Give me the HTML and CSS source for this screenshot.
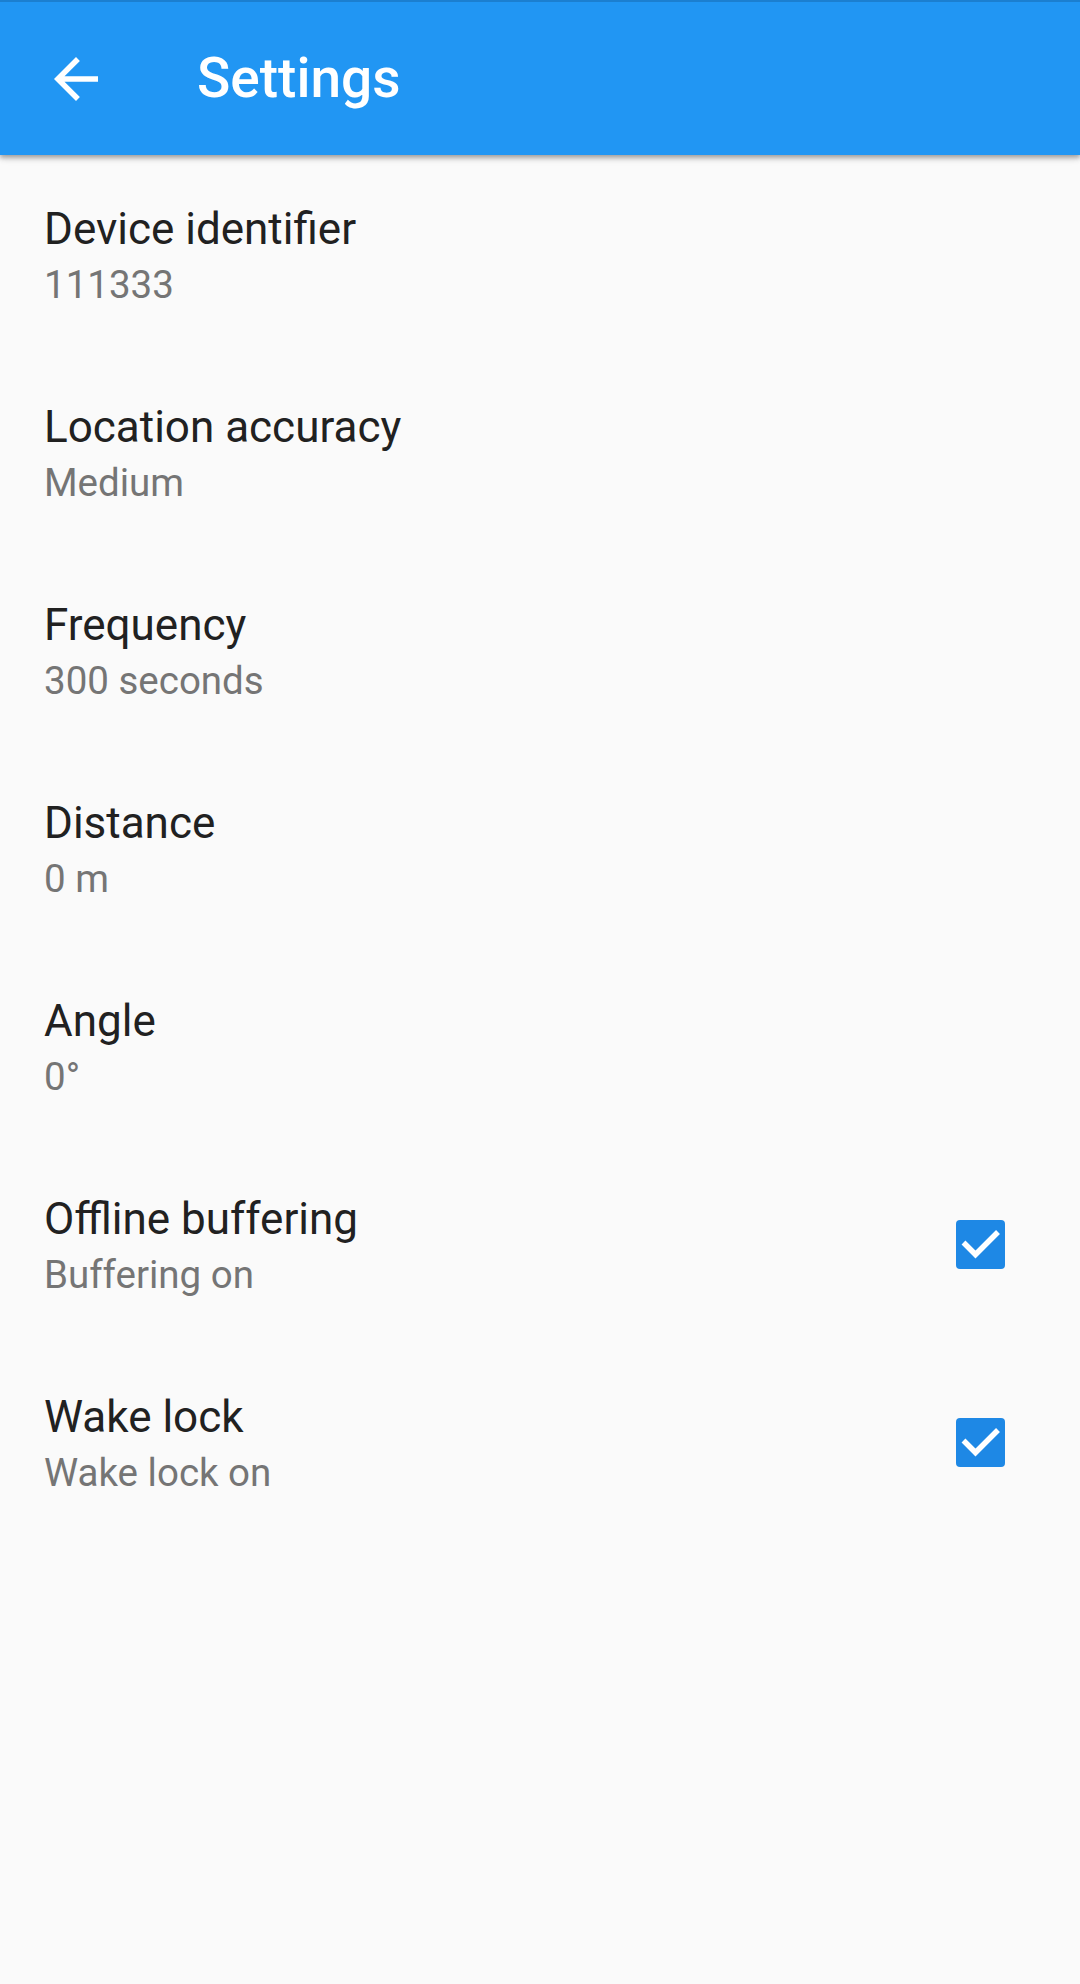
FILE: index.html
```html
<!DOCTYPE html>
<html>
<head>
<meta charset="utf-8">
<link rel="stylesheet" href="styles.css">
</head>
<body>
<header class="appbar">
  <svg class="back" viewBox="0 0 24 24" width="66" height="66"><path fill="#fff" d="M20 11H7.83l5.59-5.59L12 4l-8 8 8 8 1.41-1.41L7.83 13H20v-2z"/></svg>
  <h1 class="title">Settings</h1>
</header>
<main class="list">
  <div class="tile"><div class="text"><div class="t">Device identifier</div><div class="s">111333</div></div></div>
  <div class="tile"><div class="text"><div class="t">Location accuracy</div><div class="s">Medium</div></div></div>
  <div class="tile"><div class="text"><div class="t">Frequency</div><div class="s">300 seconds</div></div></div>
  <div class="tile"><div class="text"><div class="t">Distance</div><div class="s">0 m</div></div></div>
  <div class="tile"><div class="text"><div class="t">Angle</div><div class="s">0°</div></div></div>
  <div class="tile"><div class="text"><div class="t">Offline buffering</div><div class="s">Buffering on</div></div>
    <span class="check"><svg viewBox="0 0 49 49" width="49" height="49"><path d="M7.5 22.5 L19.5 34.5 L42 12" fill="none" stroke="#fff" stroke-width="5.5"/></svg></span></div>
  <div class="tile"><div class="text"><div class="t">Wake lock</div><div class="s">Wake lock on</div></div>
    <span class="check"><svg viewBox="0 0 49 49" width="49" height="49"><path d="M7.5 22.5 L19.5 34.5 L42 12" fill="none" stroke="#fff" stroke-width="5.5"/></svg></span></div>
</main>
</body>
</html>
```
FILE: styles.css
```css
html, body {
  margin: 0;
  padding: 0;
  background: #fafafa;
  font-family: Roboto, "Noto Sans", sans-serif;
}
body {
  width: 1080px;
  height: 1984px;
  overflow: hidden;
}
.appbar {
  height: 155px;
  background: #2196f3;
  border-top: 2px solid #1b7fd0;
  box-sizing: border-box;
  display: flex;
  align-items: center;
  box-shadow: 0 2px 4px rgba(0,0,0,0.2), 0 4px 5px rgba(0,0,0,0.14), 0 1px 10px rgba(0,0,0,0.12);
  position: relative;
  z-index: 1;
}
.back {
  margin-left: 43px;
  display: block;
}
.title {
  margin: 0 0 0 88px;
  color: #fff;
  font-size: 55px;
  font-weight: 500;
  line-height: 1;
}
.list {
  display: flex;
  flex-direction: column;
}
.tile {
  height: 198px;
  display: flex;
  align-items: center;
  padding: 0 75px 0 44px;
}
.text {
  flex: 1;
  padding-top: 12px;
}
.t {
  font-size: 44px;
  line-height: 50px;
  color: #212121;
}
.s {
  font-size: 38.5px;
  line-height: 62px;
  color: #757575;
}
.check {
  width: 49px;
  height: 49px;
  background: #1e88e5;
  border-radius: 4px;
  display: block;
}
.check svg {
  display: block;
}
```
